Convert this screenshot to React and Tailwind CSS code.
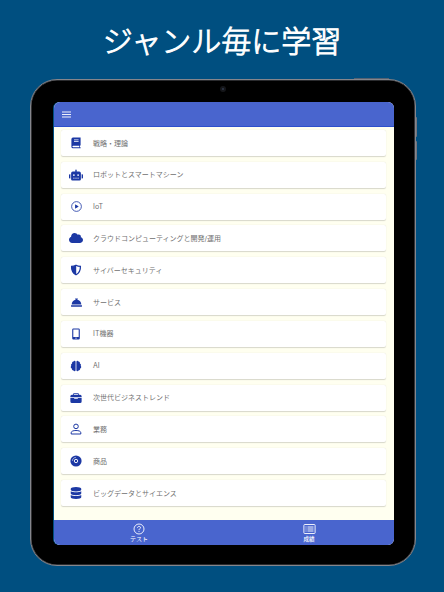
import React from "react";
import { FaRobot, FaCloud, FaConciergeBell, FaDatabase } from "react-icons/fa";
import { IoPlayCircleOutline, IoBriefcase } from "react-icons/io5";

function Book() {
  return (
    <svg width="12" height="12" viewBox="0 0 12 12">
      <path
        fill="currentColor"
        fillRule="evenodd"
        d="M3 .6h7.6v8H10v1.7h.6v1H3A1.6 1.6 0 0 1 1.4 9.700V2.200A1.6 1.6 0 0 1 3 .6ZM4 2.600v.7h4.600v-.7ZM4 4.300v.7h4.600v-.7ZM3.200 8.700a.8.8 0 0 0 0 1.600H9.300V8.700Z"
      />
    </svg>
  );
}

function ShieldHalf() {
  return (
    <svg width="12" height="12" viewBox="0 0 12 12" fill="none" stroke="currentColor" strokeWidth="1.3">
      <path d="M6 1.2C7.5 2.1 9 2.4 10.4 2.4C10.6 6.3 9.4 9 6 10.8C2.6 9 1.4 6.3 1.6 2.4C3 2.4 4.5 2.1 6 1.2Z" />
      <path d="M6.2 1.2C4.5 2.1 3 2.4 1.6 2.4C1.4 6.3 2.6 9 6.2 10.8Z" fill="currentColor" stroke="none" />
    </svg>
  );
}

function Tablet() {
  return (
    <svg width="12" height="12" viewBox="0 0 12 12">
      <path
        fill="currentColor"
        fillRule="evenodd"
        d="M3.4.6h5.2a1.2 1.2 0 0 1 1.2 1.2v8.4a1.2 1.2 0 0 1-1.2 1.2H3.4a1.2 1.2 0 0 1-1.2-1.2V1.8A1.2 1.2 0 0 1 3.4.6ZM3.3 1.6v7.4h5.4V1.600ZM5.3 9.8v.7h1.4v-.7Z"
      />
    </svg>
  );
}

function BrainHalves() {
  return (
    <svg width="12" height="12" viewBox="0 0 12 12" fill="currentColor">
      <path d="M5.6 1.7C5.5.7 4 .4 3.5 1.6C2.4 1.6 1.9 2.6 2.1 3.4C1 3.9.8 5 1.3 5.8C.4 6.8.7 8.2 1.8 8.6C1.7 10 2.8 10.6 3.5 10.5C4.1 11.6 5.5 11.3 5.6 10.3Z" />
      <path d="M6.4 1.7C6.5.7 8 .4 8.5 1.6C9.6 1.6 10.1 2.6 9.9 3.4C11 3.9 11.2 5 10.7 5.8C11.6 6.8 11.3 8.2 10.2 8.6C10.3 10 9.2 10.6 8.5 10.5C7.9 11.6 6.5 11.3 6.4 10.3Z" />
    </svg>
  );
}

function Person() {
  return (
    <svg width="12" height="12" viewBox="0 0 12 12" fill="none" stroke="currentColor" strokeWidth="1">
      <circle cx="6" cy="3.4" r="2.3" />
      <path d="M1.2 11V9.7C1.2 8.2 3.4 7.5 6 7.5S10.8 8.2 10.8 9.7V11Z" />
    </svg>
  );
}

function Disc() {
  return (
    <svg width="12" height="12" viewBox="0 0 12 12" fill="none">
      <circle cx="6" cy="6" r="5.6" fill="currentColor" />
      <circle cx="6" cy="6" r="1.7" stroke="white" strokeWidth="0.9" />
      <path d="M2.4 5.8C2.5 3.9 3.9 2.500 5.8 2.400" stroke="white" strokeWidth="0.6" />
    </svg>
  );
}

const genres = [
  { label: "戦略・理論", Icon: Book },
  { label: "ロボットとスマートマシーン", Icon: FaRobot, size: 14 },
  { label: "IoT", Icon: IoPlayCircleOutline, size: 13 },
  { label: "クラウドコンピューティングと開発/運用", Icon: FaCloud, size: 14 },
  { label: "サイバーセキュリティ", Icon: ShieldHalf },
  { label: "サービス", Icon: FaConciergeBell, size: 11 },
  { label: "IT機器", Icon: Tablet },
  { label: "AI", Icon: BrainHalves },
  { label: "次世代ビジネストレンド", Icon: IoBriefcase, size: 12 },
  { label: "業務", Icon: Person },
  { label: "商品", Icon: Disc },
  { label: "ビッグデータとサイエンス", Icon: FaDatabase, size: 12 },
];

function GenreRow({ label, Icon, size }) {
  return (
    <li className="flex h-[26px] items-center rounded-[2px] bg-white shadow-[0_0.7px_1px_rgba(0,0,0,0.16)]">
      <span className="flex w-[30px] justify-center text-[#1c38a4]">
        <Icon size={size} />
      </span>
      <span className="ml-[2px] text-[7px] leading-none whitespace-nowrap text-[#707070]">{label}</span>
    </li>
  );
}

function MenuIcon() {
  return (
    <svg width="9" height="7" viewBox="0 0 9 7" fill="none" stroke="currentColor" strokeOpacity="0.9" strokeWidth="1.2">
      <path d="M0 1h9M0 3.5h9M0 6h9" />
    </svg>
  );
}

function HelpIcon() {
  return (
    <svg width="12" height="12" viewBox="0 0 12 12" fill="none" stroke="currentColor" strokeWidth="0.9">
      <circle cx="6" cy="6" r="5" />
      <path d="M4.5 4.7C4.5 3 7.6 3 7.5 4.7C7.4 5.7 6 5.8 6 7.1M6 8.1v.9" />
    </svg>
  );
}

function ListIcon() {
  return (
    <svg width="13" height="12" viewBox="0 0 13 12" fill="none" stroke="currentColor" strokeWidth="0.9">
      <rect x="0.9" y="1.5" width="11.2" height="9" rx="0.8" />
      <path d="M2.5 4h1M4.5 4h6M2.5 6h1M4.5 6h6M2.5 8h1M4.5 8h6" />
    </svg>
  );
}

export default function App() {
  return (
    <main className="flex h-[592px] w-[444px] flex-col items-center overflow-hidden bg-[#004f80] font-[Inter,'Noto_Sans_CJK_JP',sans-serif]">
      <h1 className="flex h-[79px] items-center pt-[2px] text-[30px] leading-none font-light whitespace-nowrap text-white [-webkit-text-stroke:1px_white]">
        ジャンル毎に学習
      </h1>
      <div className="relative ml-[2px] h-[487px] w-[386px] rounded-[27px] border border-[#85868c] bg-black pt-[22px] pl-[23px] shadow-[inset_0_0_0_0.6px_#55565c]">
        <span className="absolute top-[-2px] right-[26px] h-[1px] w-[35px] bg-[#536273]" />
        <span className="absolute top-[37px] right-[-2px] h-[20px] w-[1.5px] rounded-r-sm bg-[#73747c]" />
        <span className="absolute top-[61px] right-[-2px] h-[19px] w-[1.5px] rounded-r-sm bg-[#73747c]" />
        <span className="absolute top-[6px] left-[189px] flex size-[6px] items-center justify-center rounded-full bg-[#15161a]">
          <span className="size-[2px] rounded-full bg-[#303a4d]" />
        </span>
        <div className="flex h-[443px] w-[340px] flex-col overflow-hidden rounded-[6px] bg-[#fffff0] shadow-[-1px_0_0_#004f80]">
          <header className="flex h-[25px] shrink-0 items-center border-b border-[#2d50cb] bg-[#4965ce] pl-[8px] text-white">
            <MenuIcon />
          </header>
          <ul className="flex flex-1 flex-col gap-[5.84px] pt-[3px] pr-[8px] pl-[7px]">
            {genres.map((genre) => (
              <GenreRow key={genre.label} {...genre} />
            ))}
          </ul>
          <nav className="grid h-[25px] shrink-0 grid-cols-2 bg-[#4965ce] text-white">
            <button className="flex flex-col items-center pt-[3px]">
              <HelpIcon />
              <span className="text-[6px] leading-[8px]">テスト</span>
            </button>
            <button className="flex flex-col items-center pt-[3px]">
              <ListIcon />
              <span className="text-[5.5px] leading-[8px] font-medium">成績</span>
            </button>
          </nav>
        </div>
      </div>
    </main>
  );
}
